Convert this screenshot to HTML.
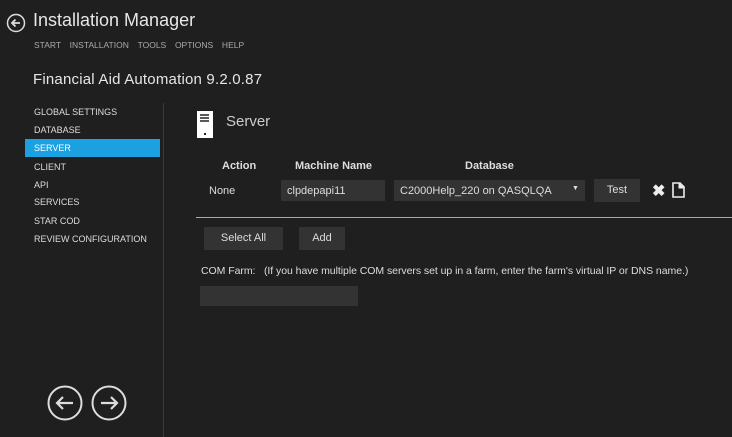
<!DOCTYPE html>
<html><head><style>
body{margin:0;width:732px;height:437px;background:#1f1f1f;font-family:"Liberation Sans",sans-serif;color:#ddd;position:relative;overflow:hidden}
.a{position:absolute;white-space:nowrap}
.box{position:absolute;background:#333}
.nav{font-size:9px;color:#ddd;left:34px}
.btn{position:absolute;background:#333;color:#ddd;font-size:11px;text-align:center}
</style></head><body>
<svg class="a" style="left:6px;top:13px" width="20" height="20" viewBox="0 0 20 20"><circle cx="10" cy="10" r="8.5" fill="none" stroke="#ddd" stroke-width="1.5"/><path d="M14 10H6M9.5 6.5L6 10l3.5 3.5" fill="none" stroke="#ddd" stroke-width="1.8"/></svg>
<div class="a" style="left:33px;top:10px;font-size:18px;color:#e6e6e6">Installation Manager</div>
<div class="a" style="left:34px;top:40px;font-size:8.5px;color:#aaa;word-spacing:2px">START &nbsp;INSTALLATION &nbsp;TOOLS &nbsp;OPTIONS &nbsp;HELP</div>
<div class="a" style="left:33px;top:71px;font-size:15px;color:#e6e6e6;letter-spacing:0.2px">Financial Aid Automation 9.2.0.87</div>
<div class="a nav" style="top:107px">GLOBAL SETTINGS</div>
<div class="a nav" style="top:125px">DATABASE</div>
<div class="a" style="left:25px;top:139px;width:135px;height:18px;background:#1ba1e2"></div>
<div class="a nav" style="top:143px;color:#fff">SERVER</div>
<div class="a nav" style="top:162px">CLIENT</div>
<div class="a nav" style="top:180px">API</div>
<div class="a nav" style="top:197px">SERVICES</div>
<div class="a nav" style="top:216px">STAR COD</div>
<div class="a nav" style="top:234px">REVIEW CONFIGURATION</div>
<div class="a" style="left:163px;top:103px;width:1px;height:334px;background:#3a3a3a"></div>
<svg class="a" style="left:197px;top:111px" width="16" height="27" viewBox="0 0 16 27"><rect width="16" height="27" fill="#fff"/><path d="M3 4h9M3 7h9M3 10h9" stroke="#222" stroke-width="1.6"/><rect x="7" y="22" width="2" height="2" fill="#222"/></svg>
<div class="a" style="left:226px;top:113px;font-size:15px;color:#ccc">Server</div>
<div class="a" style="left:222px;top:160px;font-size:11px;font-weight:bold">Action</div>
<div class="a" style="left:295px;top:160px;font-size:11px;font-weight:bold">Machine Name</div>
<div class="a" style="left:465px;top:160px;font-size:11px;font-weight:bold">Database</div>
<div class="a" style="left:209px;top:185px;font-size:11px">None</div>
<div class="box" style="left:281px;top:180px;width:104px;height:21px"></div>
<div class="a" style="left:287px;top:185px;font-size:11px">clpdepapi11</div>
<div class="box" style="left:394px;top:180px;width:191px;height:21px"></div>
<div class="a" style="left:400px;top:185px;font-size:11px">C2000Help_220 on QASQLQA</div>
<div class="a" style="left:572px;top:185px;font-size:7px">▼</div>
<div class="btn" style="left:594px;top:179px;width:46px;height:23px;line-height:23px">Test</div>
<div class="a" style="left:652px;top:181px;font-size:16px;font-weight:bold;color:#eee">✖</div>
<svg class="a" style="left:672px;top:182px" width="13" height="16" viewBox="0 0 13 16"><path d="M1 1h7l4 4v10H1z" fill="none" stroke="#eee" stroke-width="1.6"/><path d="M7 1v5h5" fill="#eee" stroke="#eee"/></svg>
<div class="a" style="left:196px;top:217px;width:536px;height:1px;background:#aaa"></div>
<div class="btn" style="left:204px;top:227px;width:79px;height:23px;line-height:23px">Select All</div>
<div class="btn" style="left:299px;top:227px;width:46px;height:23px;line-height:23px">Add</div>
<div class="a" style="left:201px;top:265px;font-size:10.5px;letter-spacing:-0.05px">COM Farm: &nbsp; (If you have multiple COM servers set up in a farm, enter the farm's virtual IP or DNS name.)</div>
<div class="box" style="left:200px;top:286px;width:158px;height:20px"></div>
<svg class="a" style="left:46px;top:384px" width="84" height="38" viewBox="0 0 84 38"><circle cx="19" cy="19" r="16.5" fill="none" stroke="#ddd" stroke-width="2"/><path d="M27 19H11M17 13l-6 6 6 6" fill="none" stroke="#ddd" stroke-width="2.2"/><circle cx="63" cy="19" r="16.5" fill="none" stroke="#ddd" stroke-width="2"/><path d="M55 19h16M65 13l6 6-6 6" fill="none" stroke="#ddd" stroke-width="2.2"/></svg>
</body></html>
